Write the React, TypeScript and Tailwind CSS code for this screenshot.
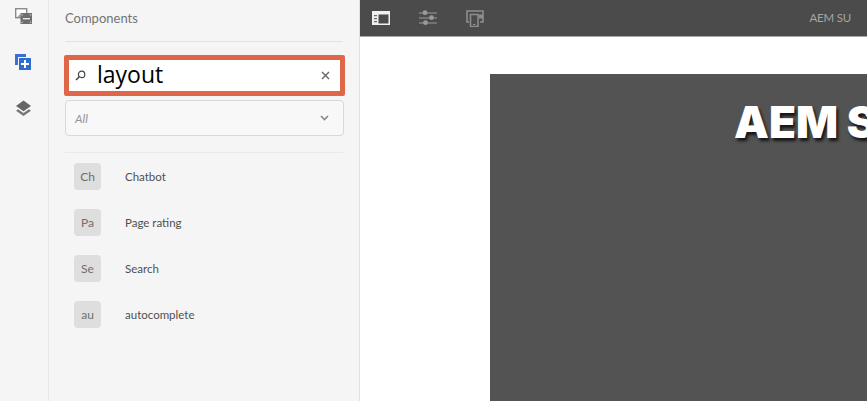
import React from "react";

const rows = [
  ["Ch", "Chatbot"],
  ["Pa", "Page rating"],
  ["Se", "Search"],
  ["au", "autocomplete"],
];

function AssetsIcon() {
  return (
    <svg width="17" height="16" viewBox="0 0 17 16">
      <rect x="0.7" y="0.7" width="11" height="9" fill="#fff" stroke="#8a8a8a" strokeWidth="1.4" />
      <path d="M2 9l3-3 2 2 2-2 2 2v1H2z" fill="#b8a8a8" />
      <rect x="5.5" y="5" width="11.5" height="11" fill="#6e6e6e" />
      <rect x="8" y="10" width="7" height="1.4" fill="#e8e8e8" />
      <rect x="6.3" y="6" width="1.5" height="1.5" fill="#b5b5b5" />
      <rect x="14.7" y="6" width="1.5" height="1.5" fill="#b5b5b5" />
      <rect x="6.3" y="13.6" width="1.5" height="1.5" fill="#b5b5b5" />
      <rect x="14.7" y="13.6" width="1.5" height="1.5" fill="#b5b5b5" />
    </svg>
  );
}

function ComponentsIcon() {
  return (
    <svg width="16" height="16" viewBox="0 0 16 16">
      <path d="M0 0h11v3H3v8H0z" fill="#3a6fd0" />
      <rect x="4" y="4" width="12" height="12" rx="0.5" fill="#2f6bd0" />
      <rect x="9" y="6" width="2" height="8" fill="#fff" />
      <rect x="6" y="9" width="8" height="2" fill="#fff" />
    </svg>
  );
}

function LayersIcon() {
  return (
    <svg width="15" height="16" viewBox="0 0 15 16">
      <path d="M7.5 0.5L15 6l-7.5 5.2L0 6z" fill="#666" />
      <path d="M2 9.3l5.5 3.8L13 9.3l2 1.4-7.5 5.2L0 10.7z" fill="#777" />
    </svg>
  );
}

function SearchIcon() {
  return (
    <svg width="11" height="11" viewBox="0 0 11 11" fill="none" stroke="#444" strokeWidth="1.2">
      <circle cx="6.6" cy="4.4" r="3.2" />
      <path d="M4.3 6.7L1 10" strokeWidth="1.5" />
    </svg>
  );
}

function PanelIcon() {
  return (
    <svg width="18" height="14" viewBox="0 0 18 14">
      <rect x="0" y="0" width="18" height="14" fill="#f0f0f0" />
      <rect x="6.5" y="3.5" width="10" height="9" fill="#4b4b4b" />
      <rect x="2" y="4" width="3" height="1.2" fill="#666" />
      <rect x="2" y="7" width="3" height="1.2" fill="#666" />
      <rect x="2" y="10" width="3" height="1.2" fill="#666" />
    </svg>
  );
}

function SlidersIcon() {
  return (
    <svg width="19" height="16" viewBox="0 0 19 16" stroke="#9a9a9a" fill="#9a9a9a">
      <path d="M0 3h18M0 8h18M0 13h18" strokeWidth="1" />
      <circle cx="6" cy="2.7" r="2.4" stroke="none" />
      <circle cx="12.5" cy="7.7" r="2.4" stroke="none" />
      <circle cx="6.5" cy="12.7" r="2.4" stroke="none" />
    </svg>
  );
}

function DevicesIcon() {
  return (
    <svg width="18" height="17" viewBox="0 0 18 17" fill="none" stroke="#8e8e8e">
      <path d="M3 12H1V1h16v11h-3" strokeWidth="1.6" />
      <rect x="4.5" y="4.5" width="7.5" height="12" strokeWidth="1.5" fill="#4b4b4b" />
      <path d="M13 4.5h4v4h-4z" fill="#8e8e8e" stroke="none" />
      <path d="M7 14.5h2.5" strokeWidth="1" />
    </svg>
  );
}

export default function App() {
  return (
    <div className="flex h-[401px] w-[867px] overflow-hidden bg-white font-['Open_Sans',sans-serif]">
      <div className="flex w-[49px] shrink-0 flex-col items-center border-r border-[#e6e6e6] bg-[#f5f5f5] pr-[2px] pt-[8px]">
        <AssetsIcon />
        <div className="mt-[30px]"><ComponentsIcon /></div>
        <div className="mt-[30px]"><LayersIcon /></div>
      </div>

      <div className="flex w-[311px] shrink-0 flex-col border-r border-[#e1e1e1] bg-[#f5f5f5]">
        <div className="mx-[16px] flex h-[42px] items-center border-b border-[#e1e1e1] pb-[4px] font-['Lato',sans-serif] text-[13px] text-[#747474]">
          Components
        </div>
        <div className="ml-[15px] mr-[14px] mt-[13px] flex h-[41px] items-center rounded-[2px] border-[5px] border-[#df6749] bg-white pl-[6px] pr-[10px]">
          <SearchIcon />
          <span className="ml-[11px] mb-[3px] text-[23px] leading-none text-black">layout</span>
          <svg className="ml-auto" width="9" height="9" viewBox="0 0 9 9" stroke="#666" strokeWidth="1.4">
            <path d="M1 1l7 7M8 1L1 8" />
          </svg>
        </div>
        <div className="ml-[16px] mr-[15px] mt-[4px] flex h-[36px] items-center justify-between rounded-[4px] border border-[#d8d8d8] bg-[#f8f8f8] pl-[9px] pr-[14px]">
          <span className="pt-[1px] font-['Lato',sans-serif] text-[12px] italic text-[#969696]">All</span>
          <svg width="9" height="6" viewBox="0 0 9 6" fill="none" stroke="#888" strokeWidth="1.6">
            <path d="M1 1l3.5 3.5L8 1" />
          </svg>
        </div>
        <div className="mx-[16px] mt-[16px] border-t border-[#e9e9e9]" />
        <div className="ml-[25px] mt-[10px] flex flex-col gap-[19px]">
          {rows.map(([abbr, label]) => (
            <div key={label} className="flex h-[27px] items-center">
              <div className="flex h-[27px] w-[27px] items-center justify-center rounded-[4px] bg-[#dedede] font-['Lato',sans-serif] text-[12px] text-[#6e6e6e]">
                {abbr}
              </div>
              <span className="ml-[24px] font-['Lato',sans-serif] text-[11.5px] text-[#505050]">{label}</span>
            </div>
          ))}
        </div>
      </div>

      <div className="flex min-w-0 flex-1 flex-col">
        <div className="flex h-[37px] shrink-0 items-center border-b border-[#a8a8a8] bg-[#4b4b4b] pl-[12px] pr-[16px]">
          <PanelIcon />
          <div className="ml-[29px]"><SlidersIcon /></div>
          <div className="ml-[28px]"><DevicesIcon /></div>
          <span className="ml-auto font-['Lato',sans-serif] text-[11.5px] tracking-[-0.2px] text-[#a5a5a5]">AEM SU</span>
        </div>
        <div className="min-h-0 flex-1 pl-[130px] pt-[37px]">
          <div className="h-full overflow-hidden whitespace-nowrap bg-[#535353] pl-[244px] pt-[18px] font-['Inter',sans-serif] text-[44px] leading-[60px] font-black text-white [text-shadow:2px_3px_3px_rgba(0,0,0,0.75)]">
            AEM SU
          </div>
        </div>
      </div>
    </div>
  );
}
